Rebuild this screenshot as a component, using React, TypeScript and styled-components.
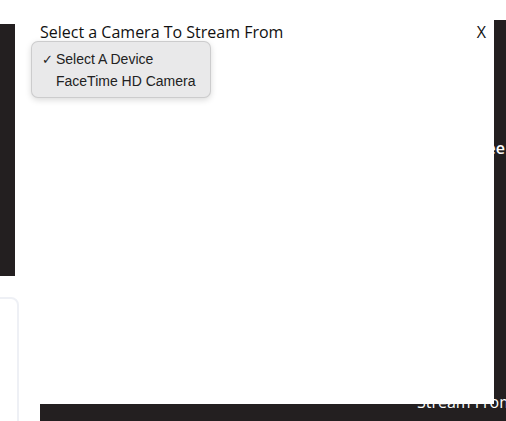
import React from "react";
import styled, { createGlobalStyle } from "styled-components";

const GlobalStyle = createGlobalStyle`
  html, body {
    margin: 0;
    padding: 0;
    background-color: #ffffff;
    overflow: hidden;
  }
  body {
    font-family: "Open Sans", "Liberation Sans", sans-serif;
  }
`;

const devices: string[] = ["Select A Device", "FaceTime HD Camera"];

const App: React.FC = () => {
  return (
    <>
      <GlobalStyle />
      <Page>
        <TopArea>
          <LeftCol>
            <SidePanel />
            <SideCard />
          </LeftCol>
          <Middle />
          <RightPanel>
            <PanelText>Settee</PanelText>
          </RightPanel>
        </TopArea>
        <BottomBar>
          <BarText>Stream From</BarText>
        </BottomBar>

        <Modal>
          <Header>
            <Title>Select a Camera To Stream From</Title>
            <Close>X</Close>
          </Header>
          <Menu>
            {devices.map((d, i) => (
              <MenuItem key={d}>
                <Check>{i === 0 ? "✓" : ""}</Check>
                {d}
              </MenuItem>
            ))}
          </Menu>
        </Modal>
      </Page>
    </>
  );
};

export default App;

const Page = styled.div`
  position: relative;
  width: 506px;
  height: 421px;
  display: flex;
  flex-direction: column;
  overflow: hidden;
`;

const TopArea = styled.div`
  display: flex;
  height: 404px;
  flex-shrink: 0;
`;

const LeftCol = styled.div`
  width: 20px;
  display: flex;
  flex-direction: column;
`;

const SidePanel = styled.div`
  flex-shrink: 0;
  margin-top: 24px;
  height: 252px;
  width: 15px;
  background-color: #231f20;
`;

const SideCard = styled.div`
  flex-shrink: 0;
  margin-top: 21px;
  margin-left: -12px;
  width: 31px;
  height: 200px;
  border: 2px solid #eef0f5;
  border-radius: 8px;
  box-sizing: border-box;
`;

const Middle = styled.div`
  flex: 1;
`;

const RightPanel = styled.div`
  margin-top: 20px;
  width: 12px;
  background-color: #231f20;
  display: flex;
  justify-content: flex-end;
  padding-top: 118px;
  box-sizing: border-box;
`;

const PanelText = styled.div`
  color: #ffffff;
  font-size: 16px;
  font-weight: 600;
  white-space: nowrap;
  height: 20px;
  line-height: 20px;
  padding-right: 1px;
`;

const BottomBar = styled.div`
  margin-left: 40px;
  flex: 1;
  background-color: #231f20;
  display: flex;
  justify-content: flex-end;
`;

const BarText = styled.div`
  margin-top: -13px;
  margin-right: -8px;
  color: #ffffff;
  font-size: 16px;
  font-weight: 500;
  line-height: 22px;
  white-space: nowrap;
`;

const Modal = styled.div`
  position: absolute;
  top: 0;
  left: 20px;
  width: 474px;
  height: 404px;
  background-color: #ffffff;
  z-index: 10;
`;

const Header = styled.div`
  display: flex;
  justify-content: space-between;
  align-items: center;
  padding: 21px 8px 0 20px;
`;

const Title = styled.div`
  font-size: 16px;
  color: #111111;
  line-height: 22px;
`;

const Close = styled.div`
  font-size: 16px;
  color: #111111;
  line-height: 22px;
  cursor: pointer;
`;

const Menu = styled.div`
  position: absolute;
  top: 41px;
  left: 11px;
  width: 180px;
  height: 57px;
  box-sizing: border-box;
  padding: 6px 0;
  background-color: #e9e9ea;
  border: 1px solid rgba(0, 0, 0, 0.12);
  border-radius: 7px;
  box-shadow: rgba(0, 0, 0, 0.15) 0px 2px 6px;
  z-index: 20;
`;

const MenuItem = styled.div`
  display: flex;
  align-items: center;
  height: 22px;
  font-family: "Liberation Sans", Arial, sans-serif;
  font-size: 14px;
  color: #222222;
`;

const Check = styled.span`
  width: 24px;
  padding-left: 10px;
  box-sizing: border-box;
  font-family: "DejaVu Sans", sans-serif;
  font-size: 13px;
`;
